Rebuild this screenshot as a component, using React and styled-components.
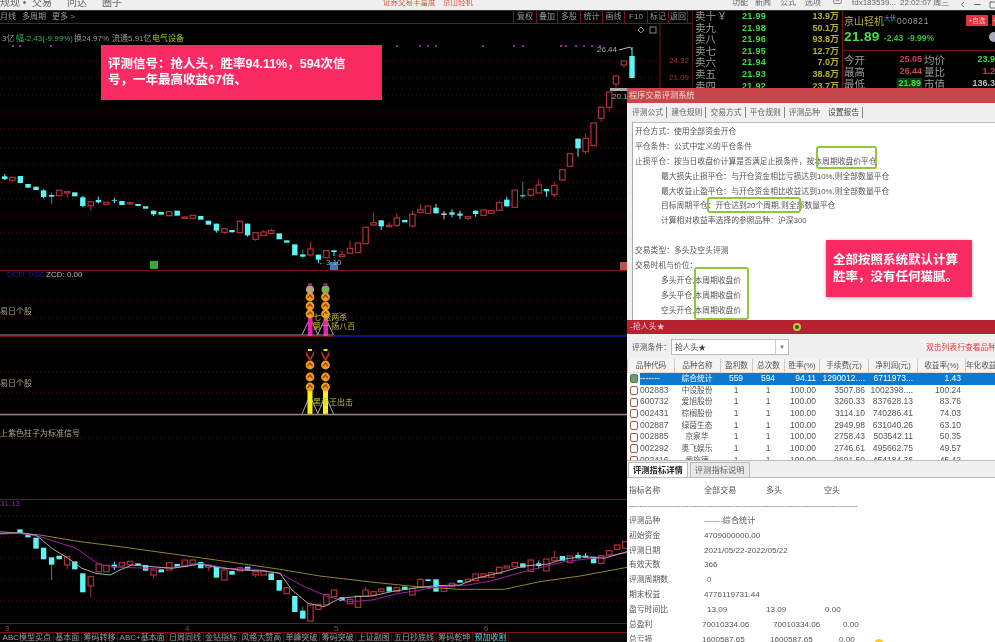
import { Fragment } from "react";
import styled, { createGlobalStyle } from "styled-components";
import { ChevronLeft, Mail, Minus, Square } from "lucide-react";

const GlobalStyle = createGlobalStyle`
  html, body {
    margin: 0;
    background: #000;
    font-family: "Liberation Sans", "Noto Sans CJK SC", sans-serif;
  }
`;

const Page = styled.div`
  position: relative;
  width: 995px;
  height: 642px;
  overflow: hidden;
  background: #000;
  filter: blur(0.4px);
`;

/* ---------- top menu ---------- */
const TopBar = styled.div`
  display: flex;
  align-items: flex-end;
  height: 10px;
  background: #efefef;
  border-bottom: 1px solid #333;
  overflow: hidden;
  font-size: 10px;
  line-height: 12px;
  color: #666;
`;
const TopItem = styled.span`
  flex: none;
  width: ${(p) => p.$w}px;
  white-space: nowrap;
  overflow: hidden;
  color: ${(p) => p.$c || "#666"};
  font-size: ${(p) => p.$fs || 10}px;
  margin-bottom: 1px;
`;
const WinBtn = styled.span`
  flex: none;
  display: flex;
  justify-content: center;
  width: 15px;
  color: #333;
  margin-bottom: 1px;
`;

const Workspace = styled.div`
  display: flex;
  height: 631px;
`;

/* ---------- chart column ---------- */
const ChartColumn = styled.div`
  display: flex;
  flex-direction: column;
  flex: none;
  width: 692px;
`;
const ChartTools = styled.div`
  display: flex;
  justify-content: space-between;
  flex: none;
  height: 12px;
  border-bottom: 1px solid #7a1418;
  font-size: 8px;
  line-height: 12px;
  color: #999;
`;
const ToolLeft = styled.div`
  display: flex;
  gap: 6px;
  padding-right: 4px;
`;
const ToolRight = styled.div`
  display: flex;
  margin-right: 4px;
`;
const ToolCell = styled.span`
  width: ${(p) => p.$w}px;
  text-align: center;
  border-left: 1px solid #7a1418;
  box-sizing: border-box;
  &:last-child {
    border-right: 1px solid #7a1418;
  }
`;
const Panel = styled.div`
  position: relative;
  flex: none;
  height: ${(p) => p.$h}px;
  overflow: hidden;
  svg {
    display: block;
  }
`;
const ChartLabel = styled.span`
  position: absolute;
  left: ${(p) => p.$x}px;
  top: ${(p) => p.$y}px;
  font-size: ${(p) => p.$fs || 8}px;
  line-height: 10px;
  color: ${(p) => p.$c || "#999"};
  white-space: nowrap;
`;
const Marker = styled.span`
  position: absolute;
  left: ${(p) => p.$x}px;
  top: ${(p) => p.$y}px;
  width: 8px;
  height: 8px;
  background: ${(p) => p.$c};
`;
const SignalCallout = styled.div`
  position: absolute;
  left: 101px;
  top: 21px;
  box-sizing: border-box;
  width: 281px;
  height: 55px;
  padding: 12px 30px 12px 7px;
  background: #fa2a62;
  color: #fff;
  font-size: 12.5px;
  font-weight: 700;
  line-height: 15.5px;
  z-index: 2;
`;
const AxisRow = styled.div`
  position: relative;
  flex: none;
  height: 10px;
  border-top: 1px solid #7a1418;
  border-bottom: 1px solid #7a1418;
  box-sizing: border-box;
  font-size: 8px;
  line-height: 9px;
  color: #8c4a4a;
`;
const AxisTick = styled.span`
  position: absolute;
  left: ${(p) => p.$x}px;
`;
const BottomTabs = styled.div`
  display: flex;
  flex: none;
  height: 9px;
  padding-left: 1px;
  background: #0a0a0a;
  overflow: hidden;
`;
const BottomTab = styled.span`
  padding: 0 1.6px;
  font-size: 8px;
  line-height: 10px;
  white-space: nowrap;
  border-right: 1px solid #4a1014;
  color: ${(p) => (p.$active ? "#4fd8d8" : "#999")};
`;

/* ---------- order book ---------- */
const OrderBook = styled.div`
  flex: none;
  width: 151px;
  box-sizing: border-box;
  padding-left: 2px;
  border-left: 1px solid #4a1014;
  border-right: 1px solid #7a1418;
`;
const BookRow = styled.div`
  display: grid;
  grid-template-columns: 47px 30px 1fr;
  align-items: center;
  height: 11.6px;
  padding-right: 3px;
  line-height: 11.6px;
`;
const BookLabel = styled.span`
  font-size: 10.5px;
  color: #999;
  white-space: nowrap;
`;
const BookPrice = styled.span`
  font-size: 9px;
  font-weight: 700;
  letter-spacing: 0.3px;
  color: #43d943;
`;
const BookVolume = styled.span`
  text-align: right;
  font-size: 9px;
  font-weight: 700;
  color: #b8b02c;
`;

/* ---------- quote ---------- */
const Quote = styled.div`
  position: relative;
  flex: 1;
  min-width: 0;
  overflow: hidden;
`;
const NameRow = styled.div`
  display: flex;
  align-items: center;
  height: 19px;
  padding-left: 1px;
  white-space: nowrap;
`;
const StockName = styled.span`
  font-size: 10px;
  color: #b8b02c;
`;
const StockTag = styled.span`
  margin: -6px 1px 0 0;
  font-size: 6px;
  color: #35b8e8;
`;
const StockCode = styled.span`
  font-size: 8.5px;
  letter-spacing: 0.6px;
  color: #999;
`;
const QuoteBtn = styled.span`
  flex: none;
  margin-left: ${(p) => p.$ml}px;
  width: ${(p) => p.$w}px;
  height: 11px;
  background: #df3340;
  color: #f5c5c5;
  font-size: 6.5px;
  line-height: 11px;
  text-align: center;
`;
const PriceRow = styled.div`
  display: flex;
  align-items: baseline;
  gap: 4px;
  height: 20px;
  padding-left: 1px;
  line-height: 14px;
  border-bottom: 1px solid #7a1418;
  color: #35c235;
  font-size: 8.5px;
  font-weight: 700;
`;
const BigPrice = styled.span`
  font-size: 13.5px;
  letter-spacing: 0.4px;
  color: #4be04b;
`;
const Ball = styled.span`
  position: absolute;
  left: 146px;
  top: 21px;
  width: 10px;
  height: 10px;
  border-radius: 50%;
  background: #aab;
`;
const StatGrid = styled.div`
  display: grid;
  grid-template-columns: 21px 57px 2px 21px 1fr;
  grid-auto-rows: 12px;
  align-items: center;
  padding: 2px 0 0 1px;
  margin-right: -5px;
`;
const StatLabel = styled.span`
  grid-column: ${(p) => p.$col};
  font-size: 10.5px;
  color: #999;
  white-space: nowrap;
`;
const StatValue = styled.span`
  grid-column: ${(p) => p.$col};
  justify-self: end;
  padding: 0 ${(p) => (p.$boxed ? 1 : 0)}px;
  font-size: 9px;
  font-weight: 700;
  color: ${(p) => p.$c};
  background: ${(p) => (p.$boxed ? "#0c3a14" : "none")};
`;

/* ---------- dialog window ---------- */
const Dialog = styled.div`
  position: absolute;
  left: 627px;
  top: 88px;
  right: 0;
  bottom: 0;
  z-index: 3;
  display: flex;
  flex-direction: column;
  background: #f0f0f0;
  overflow: hidden;
  color: #555;
  font-size: 7.8px;
`;
const DialogTitle = styled.div`
  flex: none;
  height: 15px;
  padding-left: 2px;
  background: #c9474a;
  color: #f2d4d4;
  font-size: 8.2px;
  line-height: 16px;
`;
const DialogTabs = styled.div`
  display: flex;
  align-items: center;
  flex: none;
  height: 19px;
  padding-left: 1px;
`;
const DialogTab = styled.span`
  padding: 0 3px 0 4px;
  line-height: 11px;
  border-right: 1px solid ${(p) => (p.$plain ? "transparent" : "#888")};
  color: ${(p) => (p.$active ? "#444" : "#666")};
`;
const Report = styled.div`
  flex: none;
  height: 198px;
  box-sizing: border-box;
  margin-left: 5px;
  padding: 2px 0 0 2px;
  background: #fff;
  border-left: 1px solid #aaa;
  border-top: 1px solid #bbb;
  overflow: hidden;
`;
const ReportLine = styled.div`
  height: 14.9px;
  padding-left: ${(p) => (p.$indent ? 26 : 0)}px;
  line-height: 14.9px;
  white-space: nowrap;
`;
const Highlight = styled.span`
  position: absolute;
  left: ${(p) => p.$l}px;
  top: ${(p) => p.$t}px;
  width: ${(p) => p.$w}px;
  height: ${(p) => p.$h}px;
  box-sizing: border-box;
  border: 2.5px solid #8ec63f;
  border-radius: 3px;
`;
const RateCallout = styled.div`
  position: absolute;
  left: 199px;
  top: 152px;
  box-sizing: border-box;
  width: 146px;
  height: 57px;
  padding: 12px 7px;
  background: #fa2a62;
  color: #fff;
  font-size: 12.5px;
  font-weight: 700;
  line-height: 17px;
  box-shadow: 0 1px 4px rgba(0, 0, 0, 0.3);
`;
const SubTitle = styled.div`
  position: relative;
  flex: none;
  height: 14px;
  padding-left: 3px;
  background: #b8212f;
  color: #eecbcb;
  font-size: 8px;
  line-height: 14px;
`;
const SubDot = styled.span`
  position: absolute;
  left: 166px;
  top: 3px;
  width: 4px;
  height: 4px;
  border: 2px solid #b5cc45;
  border-radius: 50%;
  background: #43521a;
`;
const Condition = styled.div`
  display: flex;
  align-items: center;
  flex: none;
  height: 25px;
  padding-left: 5px;
  white-space: nowrap;
`;
const ConditionSelect = styled.div`
  display: flex;
  flex: none;
  justify-content: space-between;
  box-sizing: border-box;
  width: 118px;
  height: 16px;
  padding-left: 3px;
  background: #fff;
  border: 1px solid #bbb;
  color: #444;
  line-height: 15px;
`;
const SelectArrow = styled.span`
  width: 12px;
  border-left: 1px solid #ccc;
  color: #777;
  font-size: 6px;
  text-align: center;
`;
const ConditionHint = styled.span`
  margin-left: 137px;
  color: #e53935;
  white-space: nowrap;
`;
const Table = styled.div`
  flex: none;
  height: 101px;
  background: #fff;
  overflow: hidden;
  font-size: 8.5px;
`;
const HeadRow = styled.div`
  display: grid;
  grid-template-columns: 47px 46px 32px 32px 35px 49px 49px 48px 1fr;
  height: 14px;
  background: #f4f4f4;
  border-bottom: 1px solid #ddd;
  box-sizing: border-box;
`;
const HeadCell = styled.span`
  font-size: 7.6px;
  line-height: 13px;
  text-align: center;
  white-space: nowrap;
  overflow: hidden;
  border-left: 1px solid #ccc;
`;
const Row = styled.div`
  display: flex;
  height: 11.67px;
  line-height: 11.67px;
`;
const RowIcon = styled.span`
  flex: none;
  display: flex;
  align-items: center;
  justify-content: center;
  width: 13px;
`;
const RowMark = styled.i`
  display: block;
  box-sizing: border-box;
  width: 8px;
  height: 9px;
  border: 1px solid ${(p) => (p.$selected ? "#4d7a4d" : "#a3564a")};
  border-radius: 2px;
  background: ${(p) => (p.$selected ? "#6f9c6f" : "#fff")};
`;
const RowCells = styled.div`
  flex: 1;
  display: grid;
  grid-template-columns: 34px 46px 32px 32px 35px 49px 49px 48px 1fr;
  background: ${(p) => (p.$selected ? "#0b78d1" : "none")};
  color: ${(p) => (p.$selected ? "#fff" : "#555")};
`;
const Cell = styled.span`
  padding-right: ${(p) => p.$pr || 0}px;
  text-align: ${(p) => p.$a || "left"};
  white-space: nowrap;
`;
const NameCell = styled(Cell)`
  font-size: 7.8px;
`;
const DetailTabs = styled.div`
  display: flex;
  align-items: flex-end;
  flex: none;
  height: 18px;
  padding-left: 1px;
  border-top: 1px solid #bbb;
  box-sizing: border-box;
  border-bottom: 1px solid #bbb;
`;
const DetailTab = styled.span`
  height: 15px;
  padding: 0 4px;
  margin-right: 2px;
  background: ${(p) => (p.$active ? "#fff" : "#e9e9e9")};
  border: 1px solid #bbb;
  border-bottom: 0;
  box-sizing: border-box;
  color: ${(p) => (p.$active ? "#222" : "#666")};
  font-size: 8.3px;
  font-weight: ${(p) => (p.$active ? 700 : 400)};
  line-height: 14px;
`;
const Detail = styled.div`
  flex: 1;
  padding: 6px 0 0 2px;
  background: #fff;
  overflow: hidden;
  font-size: 8.1px;
`;
const DetailRow = styled.div`
  display: flex;
  height: 14.9px;
  line-height: 14.9px;
  white-space: nowrap;
`;
const DetailCell = styled.span`
  flex: none;
  width: ${(p) => p.$w}px;
  font-size: ${(p) => (p.$cjk ? 7.8 : 8.1)}px;
`;
const YellowDot = styled.span`
  position: absolute;
  left: 248px;
  top: 551px;
  width: 8px;
  height: 8px;
  border-radius: 50%;
  background: #f5d020;
`;

/* ---------- chart data: x/y as read from the picture ---------- */
const mainCandles = [
  [12, 229, 237, "c", 222, 240], [31, 232, 241, "r", 232, 246], [51, 228, 249, "c"], [70, 252, 263, "c"],
  [90, 260, 270, "c"], [109, 271, 291, "c", 268, 295], [129, 285, 290, "c", 278, 312], [148, 271, 287, "r"],
  [168, 275, 279, "r", 275, 293], [187, 277, 289, "c"], [207, 292, 318, "c", 288, 322], [227, 305, 317, "r", 305, 332],
  [246, 300, 307, "c", 290, 310], [266, 307, 313, "r"], [286, 300, 302, "c", 293, 310], [305, 303, 315, "c"],
  [325, 308, 312, "r", 304, 316], [345, 312, 318, "c"], [364, 319, 326, "c"], [384, 332, 343, "c", 332, 348],
  [403, 336, 344, "c"], [423, 335, 347, "r"], [443, 332, 347, "c"], [462, 351, 355, "r"], [482, 346, 355, "r"],
  [502, 348, 359, "c"], [521, 362, 374, "c"], [541, 371, 392, "c", 371, 398], [561, 386, 397, "r", 386, 402],
  [580, 390, 397, "c"], [600, 364, 398, "r"], [619, 371, 406, "c", 371, 410], [639, 398, 418, "r", 398, 422],
  [659, 396, 406, "r", 390, 406], [678, 392, 400, "r", 386, 402], [698, 400, 418, "c"], [717, 421, 428, "c"],
  [737, 433, 466, "c"], [757, 463, 470, "c", 448, 476], [776, 447, 465, "r", 426, 470], [796, 464, 479, "c", 464, 490],
  [816, 452, 473, "r"], [835, 451, 456, "c", 451, 468], [855, 464, 470, "r", 452, 470], [875, 445, 460, "r", 422, 460],
  [895, 429, 458, "r"], [914, 382, 431, "r"], [934, 368, 375, "r", 338, 378], [953, 361, 379, "c", 361, 390],
  [973, 376, 380, "r", 366, 380], [992, 354, 376, "r", 340, 382], [1012, 360, 367, "c"], [1031, 343, 378, "r", 332, 382],
  [1051, 329, 337, "r", 312, 340], [1070, 318, 340, "r"], [1090, 323, 340, "c", 312, 340], [1110, 340, 345, "g", 333, 358],
  [1130, 337, 344, "c", 328, 352], [1150, 341, 347, "c", 332, 358], [1170, 350, 355, "r", 350, 360], [1189, 332, 342, "c", 332, 350],
  [1209, 330, 346, "r"], [1228, 332, 340, "r"], [1248, 308, 331, "r", 302, 331], [1267, 299, 319, "c", 290, 319],
  [1287, 270, 322, "r"], [1307, 286, 289, "c", 245, 296], [1327, 268, 286, "r", 268, 292], [1347, 255, 279, "r", 237, 279],
  [1366, 267, 274, "c", 267, 290], [1386, 256, 284, "r", 245, 292], [1406, 209, 240, "r", 209, 244], [1425, 161, 199, "r"],
  [1445, 116, 145, "c", 116, 170], [1464, 115, 155, "r", 100, 162], [1484, 69, 137, "r"], [1503, 22, 55, "r", 22, 66],
  [1523, -24, 22, "r", -24, 34], [1540, -72, -48, "r", -72, -36], [1560, -117, -105, "r", -117, -96], [1580, -132, -66, "c", -159, -66],
];

const lowerCandles = [
  [50, 118, 130, "c"], [70, 134, 142, "c"], [90, 143, 176, "c"], [109, 173, 208, "c"], [129, 202, 224, "c", 202, 270],
  [148, 197, 208, "c"], [168, 200, 225, "r", 200, 238], [187, 214, 238, "c"], [207, 250, 307, "c"], [227, 260, 288, "r", 260, 322],
  [247, 222, 245, "r"], [266, 226, 245, "r"], [286, 224, 232, "c", 215, 240], [305, 218, 228, "r"], [325, 214, 224, "r"],
  [345, 220, 228, "c"], [364, 225, 242, "c"], [384, 240, 255, "r", 240, 265], [403, 238, 247, "c"], [423, 218, 240, "r"],
  [443, 222, 232, "c"], [462, 210, 230, "r"], [482, 210, 222, "r"], [502, 216, 235, "c"], [521, 225, 232, "r", 225, 243],
  [541, 228, 263, "c"], [561, 240, 270, "r"], [580, 243, 254, "c"], [600, 233, 243, "r"], [619, 230, 240, "c"],
  [639, 245, 255, "r", 245, 262], [659, 243, 255, "r"], [678, 250, 270, "c"], [698, 270, 302, "c"], [717, 293, 311, "r"],
  [737, 318, 366, "c"], [757, 362, 386, "c", 350, 386], [776, 345, 393, "r"], [796, 343, 358, "r"], [816, 313, 345, "r"],
  [835, 300, 320, "r"], [855, 322, 333, "c"], [875, 328, 341, "r"], [895, 318, 352, "r"], [914, 300, 318, "r", 290, 318],
  [934, 305, 316, "r"], [953, 297, 305, "r"], [973, 290, 305, "c"], [992, 293, 305, "r"], [1012, 290, 300, "c"],
  [1031, 295, 315, "r"], [1051, 268, 292, "r"], [1070, 268, 273, "c"], [1090, 268, 305, "c"], [1110, 290, 304, "r"],
  [1130, 280, 290, "r"], [1150, 270, 278, "c"], [1170, 268, 275, "r"], [1189, 252, 272, "r"], [1209, 252, 262, "r"],
  [1228, 248, 262, "r"], [1248, 232, 250, "r"], [1267, 228, 234, "r"], [1287, 218, 230, "r"], [1307, 220, 233, "c"],
  [1327, 210, 244, "r"], [1347, 220, 228, "c", 212, 236], [1366, 207, 243, "r"], [1386, 203, 212, "r", 182, 212], [1406, 198, 212, "c"],
  [1425, 198, 218, "r"], [1445, 195, 205, "c", 187, 205], [1464, 197, 203, "c", 190, 203], [1484, 200, 220, "c"], [1503, 197, 220, "r"],
  [1523, 182, 195, "r"], [1543, 165, 178, "r"], [1563, 155, 175, "r"],
];

const maGray = "0,130 50,128 90,135 130,175 170,205 205,235 240,250 275,255 300,240 330,225 380,230 430,235 470,228 500,222 540,232 600,240 660,243 700,250 730,300 770,340 810,350 850,325 890,320 930,318 990,302 1050,292 1090,287 1150,285 1190,265 1250,248 1310,228 1370,222 1410,207 1460,200 1510,205 1568,185";
const maPurple = "0,132 50,130 100,140 190,175 250,225 300,232 380,235 430,232 500,220 570,235 640,238 700,250 760,290 820,320 870,335 930,330 990,312 1050,300 1100,290 1170,285 1230,272 1310,245 1410,215 1480,205 1568,188";
const maOlive = "0,125 100,135 200,155 300,170 420,190 540,210 700,238 800,258 920,275 1040,290 1150,298 1260,298 1350,275 1450,258 1568,232";

const toPoints = (line, baseY) =>
  line
    .split(" ")
    .map((pair) => {
      const [x, y] = pair.split(",").map(Number);
      return `${x / 2.5},${baseY + y / 3}`;
    })
    .join(" ");

const CANDLE_COLOR = { c: "#5cf5f5", r: "#b03038", g: "#bdbdbd" };

const Candles = ({ data, baseY }) =>
  data.map(([zx, top, bottom, type, wickTop, wickBottom]) => {
    const x = zx / 2.5;
    const y1 = baseY + top / 3;
    const y2 = baseY + bottom / 3;
    const color = CANDLE_COLOR[type];
    const wickColor = zx === 129 || zx === 757 || zx === 1307 ? "#2f8f6f" : color;
    return (
      <g key={zx}>
        {wickTop !== undefined && (
          <line x1={x} x2={x} y1={baseY + wickTop / 3} y2={baseY + wickBottom / 3} stroke={wickColor} strokeWidth="1" />
        )}
        <rect
          x={x - 2.7}
          y={y1}
          width="5.4"
          height={y2 - y1}
          fill={type === "r" ? "#000" : color}
          stroke={color}
          strokeWidth={type === "r" ? 1.2 : 0}
        />
      </g>
    );
  });

const GridLines = ({ ys, width = 660 }) =>
  ys.map((y) => <line key={y} x1="0" x2={width} y1={y} y2={y} stroke="#520f14" strokeDasharray="1 3" />);

const GoldBall = ({ x, y }) => (
  <g>
    <circle cx={x} cy={y} r="4.4" fill="#e5a11c" />
    <path d={`M${x - 2.5} ${y + 1} L${x} ${y - 2} L${x + 2.5} ${y + 1}`} fill="none" stroke="#b5301f" strokeWidth="1.2" />
  </g>
);

const Butterfly = ({ x, y }) => (
  <path
    d={`M${x} ${y + 4} L${x - 4.5} ${y - 4} L${x - 4} ${y + 1} L${x - 1} ${y + 6} L${x + 1} ${y + 6} L${x + 4} ${y + 1} L${x + 4.5} ${y - 4} Z`}
    fill="#b02a20"
  />
);

const purpleDots = [12, 19, 50, 396, 419, 427, 435, 482, 513, 522, 560, 565, 575, 583, 591, 599];

const MainChart = () => (
  <svg width="692" height="247" viewBox="0 24 692 247">
    <GridLines ys={[61, 78, 95, 112, 129, 148, 165, 182, 199, 216, 233, 251]} />
    {purpleDots.map((x) => (
      <rect key={x} x={x} y="45" width="2" height="2" fill="#a020a8" />
    ))}
    <Candles data={mainCandles} baseY={100} />
    <line x1="660" x2="660" y1="24" y2="271" stroke="#7a1418" />
    <rect x="610" y="88" width="17" height="3" fill="#aaa" />
    <path d="M619 50 L630 47 L632 50" fill="none" stroke="#bbb" strokeWidth="1" />
    <path d="M641 27 l3 3 l-3 3 l-3 -3 Z" fill="none" stroke="#888" />
    <rect x="650" y="27" width="6" height="6" fill="none" stroke="#888" />
    <line x1="0" x2="692" y1="270.5" y2="270.5" stroke="#7a1418" />
  </svg>
);

const SignalPanelOne = () => (
  <svg width="660" height="66" viewBox="0 271 660 66">
    <GridLines ys={[301, 318]} />
    {[310, 325.5].map((x) => (
      <g key={x}>
        <path d={`M${x - 8} 335 L${x - 2} 322 M${x + 8} 335 L${x + 2} 322`} stroke="#aaa" fill="none" />
        <rect x={x - 2} y="318" width="4.5" height="18" fill="#f01bb8" />
        <GoldBall x={x} y={314} />
        <GoldBall x={x} y={306} />
        <GoldBall x={x} y={297} />
        <circle cx={x} cy={289.5} r="4" fill={x === 310 ? "#b9a27c" : "#7fae5c"} />
        <rect x={x - 2} y="283.5" width="4" height="2" fill="#b0289a" />
      </g>
    ))}
    <line x1="0" x2="333" y1="335" y2="335" stroke="#999" strokeWidth="1.2" />
    <line x1="0" x2="333" y1="336.4" y2="336.4" stroke="#7a1418" />
    <line x1="333" x2="660" y1="336" y2="336" stroke="#1a1aa8" strokeWidth="1.5" />
  </svg>
);

const SignalPanelTwo = () => (
  <svg width="660" height="79" viewBox="0 337 660 79">
    <GridLines ys={[372, 393]} />
    {[310, 325.5].map((x) => (
      <g key={x}>
        <path d={`M${x - 8} 414 L${x - 2} 400 M${x + 8} 414 L${x + 2} 400`} stroke="#aaa" fill="none" />
        <rect x={x - 2.5} y="390" width="5" height="25" fill="#f5f01a" />
        <GoldBall x={x} y={387} />
        <GoldBall x={x} y={377} />
        <GoldBall x={x} y={365} />
        <Butterfly x={x} y={354} />
        <rect x={x - 2} y="349" width="4" height="2" fill="#e8e020" />
      </g>
    ))}
    <line x1="0" x2="660" y1="414.5" y2="414.5" stroke="#888" strokeWidth="1.5" />
    <line x1="0" x2="660" y1="415.8" y2="415.8" stroke="#7a1418" />
  </svg>
);

const LowerChart = () => (
  <svg width="660" height="207" viewBox="0 416 660 207">
    <GridLines ys={[438, 516, 537, 558, 579, 601]} />
    <line x1="0" x2="660" y1="499.5" y2="499.5" stroke="#7a1418" />
    <Candles data={lowerCandles} baseY={490} />
    <polyline points={toPoints(maOlive, 490)} fill="none" stroke="#8a8a2e" strokeWidth="1" />
    <polyline points={toPoints(maPurple, 490)} fill="none" stroke="#a01fa8" strokeWidth="1" />
    <polyline points={toPoints(maGray, 490)} fill="none" stroke="#aaa" strokeWidth="1" />
  </svg>
);

const toolCells = [["复权", 23], ["叠加", 21], ["多股", 23], ["统计", 22], ["画线", 22], ["F10", 23], ["标记", 21], ["返回", 20]];

const bottomTabs = ["ABC模型买点", "基本面", "筹码转移", "ABC+基本面", "日周同线", "金钻指标", "风格大赞高", "单峰突破", "筹码突破", "上证副图", "五日抄底线", "筹码乾坤", "预加收割"];

const book = [
  ["卖十 ¥", "21.99", "13.9万"], ["卖九", "21.98", "50.1万"], ["卖八", "21.96", "93.8万"], ["卖七", "21.95", "12.7万"],
  ["卖六", "21.94", "7.0万"], ["卖五", "21.93", "38.8万"], ["卖四", "21.92", "23.7万"],
];

const stats = [
  ["今开", "25.05", "#c8404a", "均价", "23.95", "#43d943"],
  ["最高", "26.44", "#c8404a", "量比", "1.21", "#c8404a"],
  ["最低", "21.89", "#43d943", "市值", "136.39", "#bbb"],
];

// full-width punctuation as in the reference
const COLON = "\uFF1A";
const COMMA = "\uFF0C";

const reportLines = [
  { text: `开仓方式${COLON}使用全部资金开仓` },
  { text: `平仓条件${COLON}公式中定义的平仓条件` },
  { text: `止损平仓${COLON}按当日收盘价计算是否满足止损条件${COMMA}按本周期收盘价平仓` },
  { text: `最大损失止损平仓${COLON}与开仓资金相比亏损达到10%,则全部数量平仓`, indent: true },
  { text: `最大收益止盈平仓${COLON}与开仓资金相比收益达到10%,则全部数量平仓`, indent: true },
  { text: `目标周期平仓${COLON}开仓达到20个周期,则全部数量平仓`, indent: true },
  { text: `计算相对收益率选择的参照品种${COLON}沪深300`, indent: true },
  { text: "" },
  { text: `交易类型${COLON}多头及空头评测` },
  { text: `交易时机与价位${COLON}` },
  { text: "多头开仓,本周期收盘价", indent: true },
  { text: "多头平仓,本周期收盘价", indent: true },
  { text: "空头开仓,本周期收盘价", indent: true },
];

const tableRows = [
  ["002883", "中设股份", "1", "1", "100.00", "3507.86", "1002398....", "100.24"],
  ["600732", "爱旭股份", "1", "1", "100.00", "3260.33", "837628.13", "83.76"],
  ["002431", "棕榈股份", "1", "1", "100.00", "3114.10", "740286.41", "74.03"],
  ["002887", "绿茵生态", "1", "1", "100.00", "2949.98", "631040.26", "63.10"],
  ["002885", "京泉华", "1", "1", "100.00", "2758.43", "503542.11", "50.35"],
  ["002292", "奥飞娱乐", "1", "1", "100.00", "2746.61", "495662.75", "49.57"],
  ["002416", "爱施德", "1", "1", "100.00", "2691.50", "454184.36", "45.42"],
];

const TableRow = ({ row, selected }) => (
  <Row>
    <RowIcon>
      <RowMark $selected={selected} />
    </RowIcon>
    <RowCells $selected={selected}>
      <Cell>{row[0]}</Cell>
      <NameCell $a="center">{row[1]}</NameCell>
      <Cell $a="center">{row[2]}</Cell>
      <Cell $a="center">{row[3]}</Cell>
      <Cell $a="right" $pr={3}>{row[4]}</Cell>
      <Cell $a="right" $pr={3}>{row[5]}</Cell>
      <Cell $a="right" $pr={4}>{row[6]}</Cell>
      <Cell $a="right" $pr={4}>{row[7]}</Cell>
    </RowCells>
  </Row>
);

// every cell: [text, x inside the dialog]
const detailRows = [
  [["指标名称", 2], ["全部交易", 77], ["多头", 139], ["空头", 197]],
  [["-".repeat(88), 2]],
  [["评测品种", 2], ["-------综合统计", 77]],
  [["初始资金", 2], ["4709000000.00", 77]],
  [["评测日期", 2], ["2021/05/22-2022/05/22", 77]],
  [["有效天数", 2], ["366", 77]],
  [["评测周期数", 2], ["0", 80]],
  [["期末权益", 2], ["4776119731.44", 77]],
  [["盈亏时间比", 2], ["13.09", 80], ["13.09", 139], ["0.00", 198]],
  [["总盈利", 2], ["70010334.06", 75], ["70010334.06", 146], ["0.00", 216]],
  [["总亏损", 2], ["1600587.65", 75], ["1600587.65", 143], ["0.00", 212]],
];

const App = () => {
  return (
    <>
      <GlobalStyle />
      <Page>
        <TopBar>
          <TopItem $w={32}>规现 •</TopItem>
          <TopItem $w={35}>交易</TopItem>
          <TopItem $w={35}>问达</TopItem>
          <TopItem $w={281}>圈子</TopItem>
          <TopItem $w={60} $c="#e0523f" $fs={7.5}>证券交易丰富度</TopItem>
          <TopItem $w={289} $c="#e0523f" $fs={7.5}>京山轻机</TopItem>
          <TopItem $w={23} $fs={8}>功能</TopItem>
          <TopItem $w={25} $fs={8}>新闻</TopItem>
          <TopItem $w={25} $fs={8}>公式</TopItem>
          <TopItem $w={28} $fs={8}>选项</TopItem>
          <TopItem $w={19} $fs={8}><Mail size={9} /></TopItem>
          <TopItem $w={48} $fs={8}>tdx183539...</TopItem>
          <TopItem $w={55} $fs={8}>22:02:07 周三</TopItem>
          <WinBtn><ChevronLeft size={9} /></WinBtn>
          <WinBtn><Minus size={9} /></WinBtn>
          <WinBtn><Square size={8} /></WinBtn>
        </TopBar>

        <Workspace>
          <ChartColumn>
            <ChartTools>
              <ToolLeft>
                <span>月线</span>
                <span>多周期</span>
                <span>更多 &gt;</span>
              </ToolLeft>
              <ToolRight>
                {toolCells.map(([label, w]) => (
                  <ToolCell key={label} $w={w}>{label}</ToolCell>
                ))}
              </ToolRight>
            </ChartTools>

            <Panel $h={247}>
              <MainChart />
              <ChartLabel $x={2} $y={10} $c="#999">3亿</ChartLabel>
              <ChartLabel $x={16} $y={10} $c="#35b56a">幅-2.43(-9.99%)</ChartLabel>
              <ChartLabel $x={74} $y={10}>换24.97%</ChartLabel>
              <ChartLabel $x={112} $y={10}>流通5.91亿</ChartLabel>
              <ChartLabel $x={152} $y={10} $c="#a8c81e">电气设备</ChartLabel>
              <SignalCallout>{`评测信号${COLON}抢人头${COMMA}胜率94.11%${COMMA}594次信号${COMMA}一年最高收益67倍、`}</SignalCallout>
              <ChartLabel $x={597} $y={21} $c="#aaa">26.44</ChartLabel>
              <ChartLabel $x={669} $y={32} $c="#a8323a">24.32</ChartLabel>
              <ChartLabel $x={669} $y={49} $c="#a8323a">21.09</ChartLabel>
              <ChartLabel $x={612} $y={68} $c="#aaa">20.1</ChartLabel>
              <Marker $x={150} $y={237} $c="#3aa53a" />
              <Marker $x={330} $y={238} $c="#3a78b8" />
              <Marker $x={620} $y={238} $c="#c0504a" />
              <ChartLabel $x={318} $y={234} $c="#aaa">←3.10</ChartLabel>
            </Panel>

            <Panel $h={66}>
              <SignalPanelOne />
              <ChartLabel $x={7} $y={-1} $c="#1c1ca8">DCD: 0.00</ChartLabel>
              <ChartLabel $x={46} $y={-1} $c="#bbb">ZCD: 0.00</ChartLabel>
              <ChartLabel $x={0} $y={36} $c="#aaa080">易日个股</ChartLabel>
              <ChartLabel $x={313} $y={42} $c="#c8c020">七 送两杀</ChartLabel>
              <ChartLabel $x={313} $y={51} $c="#c8c020">第一 扬八百</ChartLabel>
            </Panel>

            <Panel $h={79}>
              <SignalPanelTwo />
              <ChartLabel $x={0} $y={42} $c="#aaa080">易日个股</ChartLabel>
              <ChartLabel $x={313} $y={61} $c="#c8c020">黑手王出击</ChartLabel>
            </Panel>

            <Panel $h={207}>
              <LowerChart />
              <ChartLabel $x={0} $y={13} $c="#aaa080">上紫色柱子为标准信号</ChartLabel>
              <ChartLabel $x={0} $y={83} $c="#a01fa8">31.13</ChartLabel>
            </Panel>

            <AxisRow>
              <AxisTick $x={5}>3</AxisTick>
              <AxisTick $x={185}>4</AxisTick>
              <AxisTick $x={334}>5</AxisTick>
              <AxisTick $x={484}>6</AxisTick>
            </AxisRow>
            <BottomTabs>
              {bottomTabs.map((tab, i) => (
                <BottomTab key={tab} $active={i === bottomTabs.length - 1}>{tab}</BottomTab>
              ))}
            </BottomTabs>
          </ChartColumn>

          <OrderBook>
            {book.map(([label, price, volume]) => (
              <BookRow key={label}>
                <BookLabel>{label}</BookLabel>
                <BookPrice>{price}</BookPrice>
                <BookVolume>{volume}</BookVolume>
              </BookRow>
            ))}
          </OrderBook>

          <Quote>
            <NameRow>
              <StockName>京山轻机</StockName>
              <StockTag>大伏</StockTag>
              <StockCode>000821</StockCode>
              <QuoteBtn $ml={37} $w={22}>+自选</QuoteBtn>
              <QuoteBtn $ml={4} $w={6}>+</QuoteBtn>
            </NameRow>
            <PriceRow>
              <BigPrice>21.89</BigPrice>
              <span>-2.43</span>
              <span>-9.99%</span>
            </PriceRow>
            <Ball />
            <StatGrid>
              {stats.map(([l1, v1, c1, l2, v2, c2]) => (
                <Fragment key={l1}>
                  <StatLabel $col={1}>{l1}</StatLabel>
                  <StatValue $col={2} $c={c1} $boxed={l1 === "最低"}>{v1}</StatValue>
                  <StatLabel $col={4}>{l2}</StatLabel>
                  <StatValue $col={5} $c={c2}>{v2}</StatValue>
                </Fragment>
              ))}
            </StatGrid>
          </Quote>
        </Workspace>

        <Dialog>
          <DialogTitle>程序交易评测系统</DialogTitle>
          <DialogTabs>
            <DialogTab>评测公式</DialogTab>
            <DialogTab>建仓规则</DialogTab>
            <DialogTab>交易方式</DialogTab>
            <DialogTab>平仓规则</DialogTab>
            <DialogTab $plain>评测品种</DialogTab>
            <DialogTab $active>设置报告</DialogTab>
          </DialogTabs>
          <Report>
            {reportLines.map((line, i) => (
              <ReportLine key={i} $indent={line.indent}>{line.text}</ReportLine>
            ))}
          </Report>
          <SubTitle>
            -抢人头★
            <SubDot />
          </SubTitle>
          <Condition>
            <span>{`评测条件${COLON}`}</span>
            <ConditionSelect>
              抢人头★
              <SelectArrow>▼</SelectArrow>
            </ConditionSelect>
            <ConditionHint>双击列表行查看品种明细</ConditionHint>
          </Condition>
          <Table>
            <HeadRow>
              {["品种代码", "品种名称", "盈利数", "总次数", "胜率(%)", "手续费(元)", "净利润(元)", "收益率(%)", "年化收益"].map((h) => (
                <HeadCell key={h}>{h}</HeadCell>
              ))}
            </HeadRow>
            <TableRow selected row={["-------", "综合统计", "559", "594", "94.11", "1290012....", "6711973...", "1.43"]} />
            {tableRows.map((row) => (
              <TableRow key={row[0]} row={row} />
            ))}
          </Table>
          <DetailTabs>
            <DetailTab $active>评测指标详情</DetailTab>
            <DetailTab>评测指标说明</DetailTab>
          </DetailTabs>
          <Detail>
            {detailRows.map((cells, i) => (
              <DetailRow key={i}>
                {cells.map(([text, x], j) => (
                  <DetailCell key={j} $cjk={j === 0} $w={cells[j + 1] ? cells[j + 1][1] - x : 200}>{text}</DetailCell>
                ))}
              </DetailRow>
            ))}
          </Detail>
          <Highlight $l={189} $t={58} $w={61} $h={23} />
          <Highlight $l={80} $t={109} $w={94} $h={16} />
          <Highlight $l={67} $t={179} $w={55} $h={53} />
          <RateCallout>{`全部按照系统默认计算胜率${COMMA}没有任何猫腻。`}</RateCallout>
          <YellowDot />
        </Dialog>
      </Page>
    </>
  );
};

export default App;
